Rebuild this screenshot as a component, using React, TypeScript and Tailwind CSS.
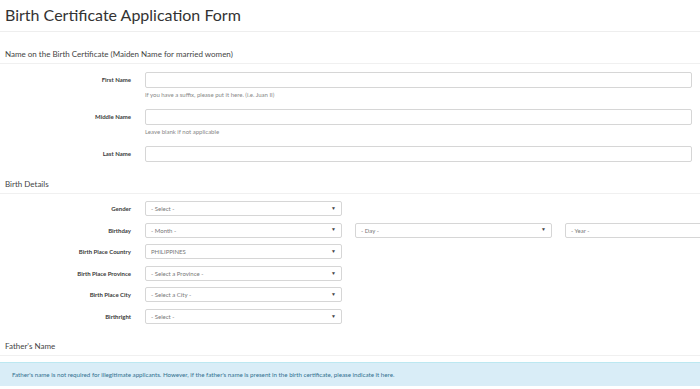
import { type ReactNode } from "react";

function Heading({ children, className = "" }: { children: ReactNode; className?: string }) {
  return (
    <div className={`border-b border-[#f0f0f0] pb-[3px] pl-[5px] text-[8px] leading-[12px] text-[#444] ${className}`}>
      {children}
    </div>
  );
}

function Row({ label, children, className = "" }: { label: string; children: ReactNode; className?: string }) {
  return (
    <div className={`flex items-start gap-[14px] ${className}`}>
      <div className="flex h-[15px] w-[131px] shrink-0 items-center justify-end text-[6px] font-bold text-[#3a3a3a]">
        {label}
      </div>
      {children}
    </div>
  );
}

function TextInput({ help }: { help?: string }) {
  return (
    <div className="mr-[8px] flex-1">
      <div className="h-[16px] rounded-[2px] border border-[#d6d6d6] bg-white" />
      {help && <p className="mt-[3px] text-[6px] leading-[8px] text-[#888]">{help}</p>}
    </div>
  );
}

function Select({ text }: { text: string }) {
  return (
    <div className="flex h-[15px] w-[197px] shrink-0 items-center justify-between rounded-[2px] border border-[#d6d6d6] bg-white px-[5px] text-[6px] text-[#777]">
      <span>{text}</span>
      <span className="text-[5px] text-[#444]">▼</span>
    </div>
  );
}

export default function App() {
  return (
    <div className="h-[389px] w-[700px] overflow-hidden bg-white font-['Lato','Open_Sans',sans-serif]">
      <div className="border-b border-[#eee] pb-[5px] pl-[5px] pt-[4px] text-[16px] leading-[22px] text-[#333]">
        Birth Certificate Application Form
      </div>

      <Heading className="mt-[16px]">Name on the Birth Certificate (Maiden Name for married women)</Heading>

      <Row label="First Name" className="mt-[8px]">
        <TextInput help="If you have a suffix, please put it here. (i.e. Juan II)" />
      </Row>
      <Row label="Middle Name" className="mt-[10px]">
        <TextInput help="Leave blank if not applicable" />
      </Row>
      <Row label="Last Name" className="mt-[10px]">
        <TextInput />
      </Row>

      <Heading className="mt-[16px]">Birth Details</Heading>

      <div className="mt-[7px] flex flex-col gap-[6.6px]">
        <Row label="Gender">
          <Select text="- Select -" />
        </Row>
        <Row label="Birthday">
          <div className="flex gap-[13px]">
            <Select text="- Month -" />
            <Select text="- Day -" />
            <Select text="- Year -" />
          </div>
        </Row>
        <Row label="Birth Place Country">
          <Select text="PHILIPPINES" />
        </Row>
        <Row label="Birth Place Province">
          <Select text="- Select a Province -" />
        </Row>
        <Row label="Birth Place City">
          <Select text="- Select a City -" />
        </Row>
        <Row label="Birthright">
          <Select text="- Select -" />
        </Row>
      </div>

      <Heading className="mt-[16px]">Father&apos;s Name</Heading>

      <div className="mt-[6px] border-t border-[#bce8f1] bg-[#d9edf7] px-[12px] py-[7px] text-[6.2px] leading-[9px] text-[#31708f]">
        Father&apos;s name is not required for illegitimate applicants. However, if the father&apos;s name is present in the birth certificate, please indicate it here.
      </div>
    </div>
  );
}
